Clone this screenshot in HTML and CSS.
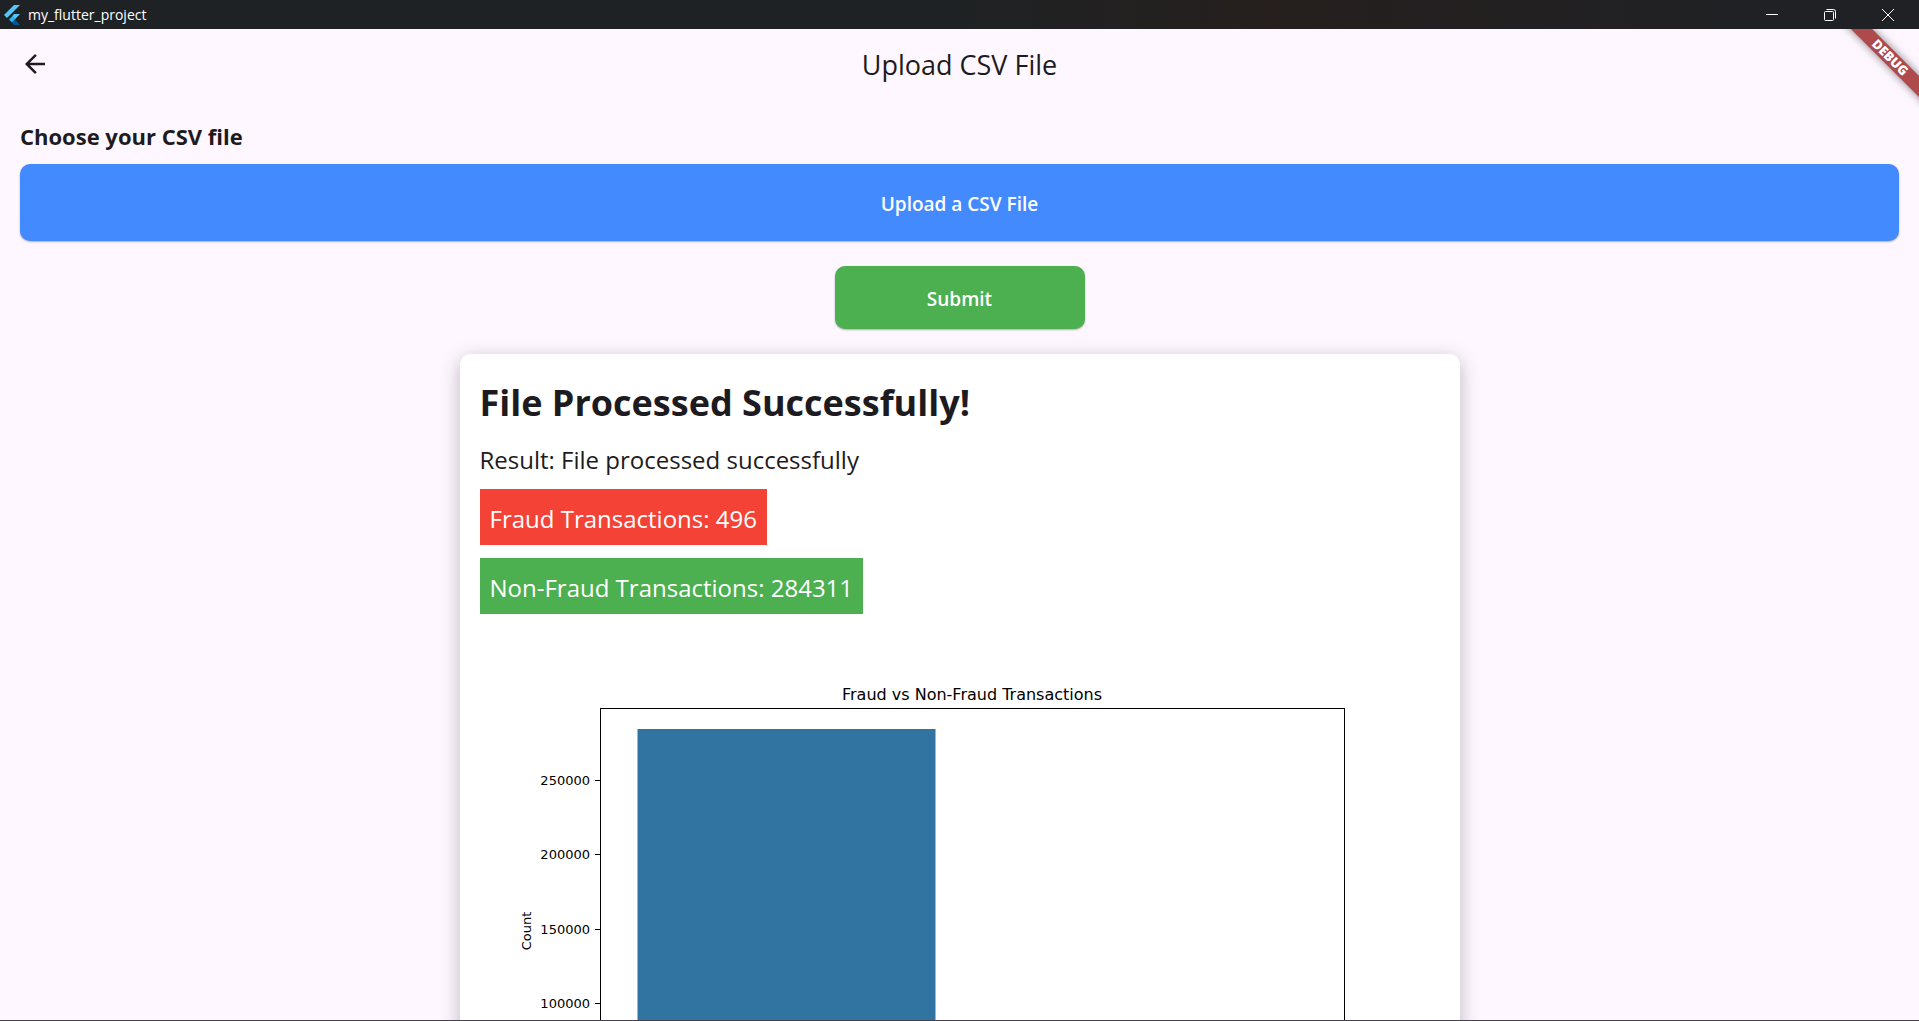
FILE: index.html
```html
<!DOCTYPE html>
<html lang="en">
<head>
<meta charset="utf-8">
<meta name="viewport" content="width=device-width, initial-scale=1">
<title>my_flutter_project</title>
<link rel="stylesheet" href="styles.css">
</head>
<body>
<div class="window">
  <header class="titlebar">
    <svg class="titlebar-logo" viewBox="0 0 16 20" aria-hidden="true">
      <path fill="#54c5f8" d="M10 0h6L3 13l-3-3z"/>
      <path fill="#54c5f8" d="M10 9h6l-5 5.300-3-3z"/>
      <path fill="#29b6f6" d="M5 14.500l3.200-3.200 3 3-3.200 3.200z"/>
      <path fill="#01579b" d="M8 17.500l3-3 5 5.500h-6z"/>
    </svg>
    <span class="titlebar-name">my_flutter_project</span>
    <div class="window-controls">
      <button class="window-button" type="button" aria-label="Minimize">
        <svg viewBox="0 0 12 12" aria-hidden="true"><path d="M0 5.500h12"/></svg>
      </button>
      <button class="window-button" type="button" aria-label="Restore">
        <svg viewBox="0 0 12 12" aria-hidden="true"><rect x=".5" y="2.500" width="9" height="9" rx="1"/><path d="M2.500 .5h7a2 2 0 0 1 2 2v7"/></svg>
      </button>
      <button class="window-button" type="button" aria-label="Close">
        <svg viewBox="0 0 12 12" aria-hidden="true"><path d="M0 0l12 12M12 0L0 12"/></svg>
      </button>
    </div>
  </header>

  <div class="app">
    <div class="debug-corner"><span class="debug-banner">DEBUG</span></div>

    <div class="appbar">
      <button class="back" type="button" aria-label="Back">
        <svg viewBox="0 0 24 24" aria-hidden="true"><path d="M20 11H7.830l5.590-5.590L12 4l-8 8 8 8 1.410-1.410L7.830 13H20z"/></svg>
      </button>
      <h1 class="appbar-title">Upload CSV File</h1>
    </div>

    <main class="content">
      <h2 class="section-title">Choose your CSV file</h2>
      <button class="button upload" type="button">Upload a CSV File</button>
      <button class="button submit" type="button">Submit</button>

      <section class="card">
        <h2 class="card-title">File Processed Successfully!</h2>
        <p class="result">Result: File processed successfully</p>
        <p class="tag fraud">Fraud Transactions: 496</p>
        <p class="tag non-fraud">Non-Fraud Transactions: 284311</p>
        <svg class="chart" viewBox="0 0 960 576" role="img" aria-labelledby="chart-title">
          <text id="chart-title" class="chart-title" x="492" y="61" text-anchor="middle">Fraud vs Non-Fraud Transactions</text>
          <rect class="bar" x="157.500" y="90" width="298" height="423"/>
          <rect class="bar" x="529" y="512" width="298" height="1"/>
          <rect class="frame" x="120.500" y="69.500" width="744" height="443"/>
          <path class="ticks" d="M115 141.500h5M115 215.500h5M115 290.500h5M115 364.500h5"/>
          <g class="tick-labels" text-anchor="end">
            <text x="110" y="146">250000</text>
            <text x="110" y="220">200000</text>
            <text x="110" y="295">150000</text>
            <text x="110" y="369">100000</text>
          </g>
          <text class="axis-label" transform="translate(51 292) rotate(-90)" text-anchor="middle">Count</text>
        </svg>
      </section>
    </main>
  </div>
</div>
</body>
</html>
```
FILE: styles.css
```css
* {
  box-sizing: border-box;
}

body {
  margin: 0;
  font-family: "Open Sans", "Noto Sans", sans-serif;
  color: #1d1b20;
  background: #fef7ff;
}

h1,
h2,
p {
  margin: 0;
}

button {
  border: 0;
  padding: 0;
  font: inherit;
  color: inherit;
  background: none;
}

.window {
  display: flex;
  flex-direction: column;
  height: 100vh;
  border-bottom: 1px solid #45404a;
}

/* Title bar */
.titlebar {
  display: flex;
  flex: none;
  align-items: center;
  height: 29px;
  padding: 0 2px 0 4px;
  color: #fff;
  background: linear-gradient(90deg, #1f2224 50%, #261f1e 66%, #202124 90%);
}

.titlebar-logo {
  width: 16px;
  height: 20px;
}

.titlebar-name {
  margin-left: 8px;
  font-size: 14px;
}

.window-controls {
  display: flex;
  margin-left: auto;
}

.window-button {
  display: flex;
  align-items: center;
  justify-content: center;
  width: 58px;
  height: 29px;
}

.window-button svg {
  width: 12px;
  height: 12px;
  fill: none;
  stroke: #fff;
}

/* App */
.app {
  position: relative;
  flex: 1;
  min-height: 0;
  overflow: hidden;
}

.debug-corner {
  position: absolute;
  top: 0;
  right: 0;
  width: 80px;
  height: 80px;
  overflow: hidden;
}

.debug-banner {
  position: absolute;
  top: 21px;
  right: -41px;
  width: 140px;
  font-size: 13px;
  font-weight: 800;
  line-height: 15px;
  text-align: center;
  color: #fff;
  background: #ae4a4b;
  box-shadow: 0 0 8px rgba(0, 0, 0, 0.5);
  transform: rotate(45deg);
}

.appbar {
  display: grid;
  grid-template-columns: 70px 1fr 70px;
  align-items: center;
  height: 70px;
}

.back {
  display: flex;
  justify-content: center;
}

.back svg {
  width: 30px;
  height: 30px;
  fill: #1d1b20;
}

.appbar-title {
  font-size: 27px;
  font-weight: 400;
  text-align: center;
}

.content {
  display: flex;
  flex-direction: column;
  padding: 20px;
}

.section-title {
  margin-bottom: 11px;
  font-size: 22px;
  font-weight: 700;
  line-height: 34px;
}

.button {
  padding-top: 2px;
  border-radius: 10px;
  font-size: 19px;
  font-weight: 600;
  color: #fff;
  box-shadow: 0 1px 2px rgba(0, 0, 0, 0.3);
}

.upload {
  height: 77px;
  background: #448aff;
}

.submit {
  align-self: center;
  width: 250px;
  height: 63px;
  margin: 25px 0;
  background: #4caf50;
}

/* Result card */
.card {
  display: flex;
  flex-direction: column;
  align-items: flex-start;
  align-self: center;
  width: 100%;
  max-width: 1000px;
  padding: 20px;
  border-radius: 10px;
  background: #fff;
  box-shadow: 0 5px 20px rgba(0, 0, 0, 0.26);
}

.card-title {
  font-size: 36px;
  font-weight: 700;
  line-height: 58px;
}

.result {
  margin: 10px 0 11px;
  font-size: 24px;
  line-height: 36px;
}

.tag {
  margin-bottom: 13px;
  padding: 12px 10px 8px;
  font-size: 24px;
  line-height: 36px;
  color: #fff;
}

.fraud {
  background: #f44336;
}

.non-fraud {
  background: #4caf50;
}

/* Bar chart */
.chart {
  width: 100%;
  margin-top: 12px;
  font-family: "DejaVu Sans", sans-serif;
}

.chart-title {
  font-size: 16px;
}

.tick-labels,
.axis-label {
  font-size: 13px;
}

.bar {
  fill: #3274a1;
}

.frame,
.ticks {
  fill: none;
  stroke: #000;
}
```
